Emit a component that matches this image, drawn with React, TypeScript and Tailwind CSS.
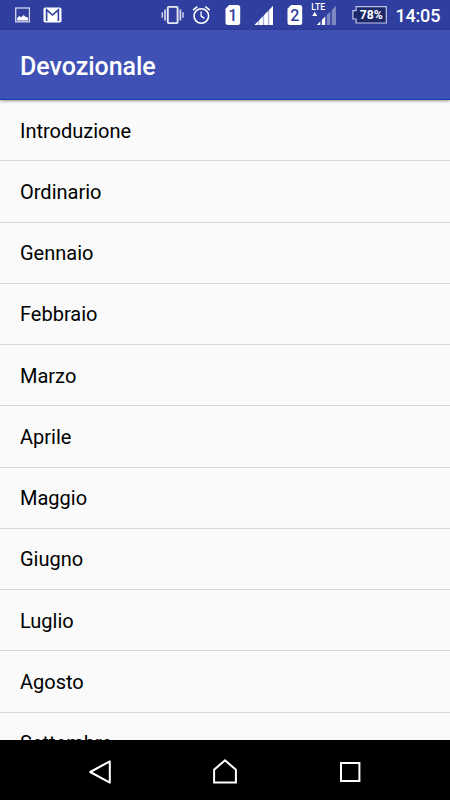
import React from 'react';

const months = [
  'Introduzione', 'Ordinario', 'Gennaio', 'Febbraio', 'Marzo', 'Aprile',
  'Maggio', 'Giugno', 'Luglio', 'Agosto', 'Settembre',
];

function Sim({ label }: { label: string }) {
  return (
    <svg className="block h-[30px] w-4 shrink-0" viewBox="0 0 16 30">
      <path d="M4.2 5H12.7Q15.2 5 15.2 7.5V22.5Q15.2 25 12.7 25H3Q.5 25 .5 22.5V8.7Z" fill="#fff" />
      <text x="7.9" y="21.2" textAnchor="middle" fontSize="16" fontWeight="500" fill="#303f9f">{label}</text>
    </svg>
  );
}

function StatusBar() {
  return (
    <div className="flex h-[30px] shrink-0 items-start bg-[#303f9f] text-white">
      <svg className="ml-[15px] block h-[30px] w-[15px] shrink-0" viewBox="0 0 15 30">
        <rect x=".7" y="8" width="13.8" height="13.8" fill="none" stroke="#d3d7ee" strokeWidth="1.3" />
        <path d="M2.2 20.4V18L4.3 16L6.3 17.3L8.6 15L10.4 16.8L13 17.5V20.4Z" fill="#fff" />
      </svg>
      <svg className="ml-[13px] block h-[30px] w-[19px] shrink-0" viewBox="0 0 19 30">
        <rect x=".5" y="7.5" width="18" height="15" rx="1.8" fill="#fff" />
        <path d="M3.6 21V9.8L9.5 15L15.4 9.8V21" fill="none" stroke="#303f9f" strokeWidth="1.6" />
      </svg>
      <svg className="ml-[99px] block h-[30px] w-[23px] shrink-0" viewBox="0 0 23 30">
        <rect x="6.8" y="6.9" width="9.8" height="16.2" rx="1" fill="none" stroke="#e8eaf6" strokeWidth="1.9" />
        <path d="M4 9.5V20.5M19.4 9.5V20.5" stroke="#d5d9ef" strokeWidth="1.7" />
        <path d="M1.3 12.3V17.7M22 12.3V17.7" stroke="#d5d9ef" strokeWidth="1.4" />
      </svg>
      <svg className="ml-2 block h-[30px] w-[19px] shrink-0" viewBox="0 0 19 30" fill="none" stroke="#fff">
        <circle cx="9.3" cy="16" r="7.3" strokeWidth="1.6" />
        <path d="M1 10.2L5.4 6.6M17.7 10.2L13.3 6.6" strokeWidth="1.7" />
        <path d="M9.1 11.6V16.1L12.4 18.4" strokeWidth="1.3" />
      </svg>
      <div className="ml-[14px] flex"><Sim label="1" /></div>
      <svg className="ml-[13px] block h-[30px] w-5 shrink-0" viewBox="0 0 20 30" fill="#fff">
        <path d="M.5 25L3.8 21.6V25ZM5.2 20.2L8.8 16.4V25H5.2ZM10.2 15L13.8 11.3V25H10.2ZM15.3 9.8L19 6V25H15.3Z" />
        <path d="M.5 25L19 6V25Z" opacity=".6" />
      </svg>
      <div className="ml-[13px] flex"><Sim label="2" /></div>
      <svg className="ml-[7px] block h-[30px] w-[26px] shrink-0" viewBox="0 0 26 30" fill="#fff">
        <text x="1.3" y="10.3" fontSize="8.6" fontWeight="500" textLength="13.8" lengthAdjust="spacingAndGlyphs">LTE</text>
        <path d="M4.7 11.8L7.2 16H2.2Z" />
        <path d="M6.8 25L10.3 21.5V25ZM11.8 20L15.2 16.5V25H11.8Z" />
        <path d="M16.8 15L20.3 11.5V25H16.8ZM21.8 10L26 5.8V25H21.8Z" opacity=".38" />
      </svg>
      <svg className="ml-4 block h-[30px] w-9 shrink-0" viewBox="0 0 36 30">
        <path d="M4.1 6.7H34.3V23H4.1V19H.9V10.7H4.1Z" fill="#1d2869" stroke="#bfc5e7" strokeWidth="1.2" />
        <text x="19.3" y="19.3" textAnchor="middle" fontSize="12" fontWeight="700" fill="#fff" textLength="23" lengthAdjust="spacingAndGlyphs">78%</text>
      </svg>
      <span className="ml-[7.5px] text-[18px] leading-[31px] font-medium tracking-[-0.2px]">14:05</span>
    </div>
  );
}

export default function App() {
  return (
    <div className="flex h-[800px] w-[450px] flex-col overflow-hidden bg-[#fafafa] font-['Roboto',sans-serif]">
      <StatusBar />
      <header className="z-10 flex h-[70px] shrink-0 items-center border-b border-[#1738a8] bg-[#3f51b5] pl-5 text-white shadow-[0_1px_3px_rgba(0,0,0,0.4)]">
        <h1 className="pt-[5px] text-[25px] leading-[30px] font-medium tracking-[-0.03px]">Devozionale</h1>
      </header>
      <main className="min-h-0 flex-1 overflow-hidden">
        {months.map((month) => (
          <div key={month} className="flex h-[61.25px] items-center border-b border-[#d5d5d5] pt-[0.8px] pl-5 text-[20px] leading-6 text-black">
            <span>{month}</span>
          </div>
        ))}
      </main>
      <nav className="flex h-[60px] shrink-0 items-start bg-black">
        <svg className="ml-[88px] block h-[60px] w-6" viewBox="0 0 24 60" fill="none" stroke="#fff" strokeWidth="2" strokeLinejoin="round">
          <path d="M2.2 32L21.8 21.3V42.7Z" />
        </svg>
        <svg className="ml-[100px] block h-[60px] w-[26px]" viewBox="0 0 26 60" fill="none" stroke="#fff" strokeWidth="2">
          <path d="M2.1 42.6V29.7L13 20.3L23.9 29.7V42.6Z" />
        </svg>
        <svg className="ml-[101px] block h-[60px] w-[22px]" viewBox="0 0 22 60" fill="none" stroke="#fff" strokeWidth="2">
          <rect x="2" y="23" width="18.4" height="18" />
        </svg>
      </nav>
    </div>
  );
}
